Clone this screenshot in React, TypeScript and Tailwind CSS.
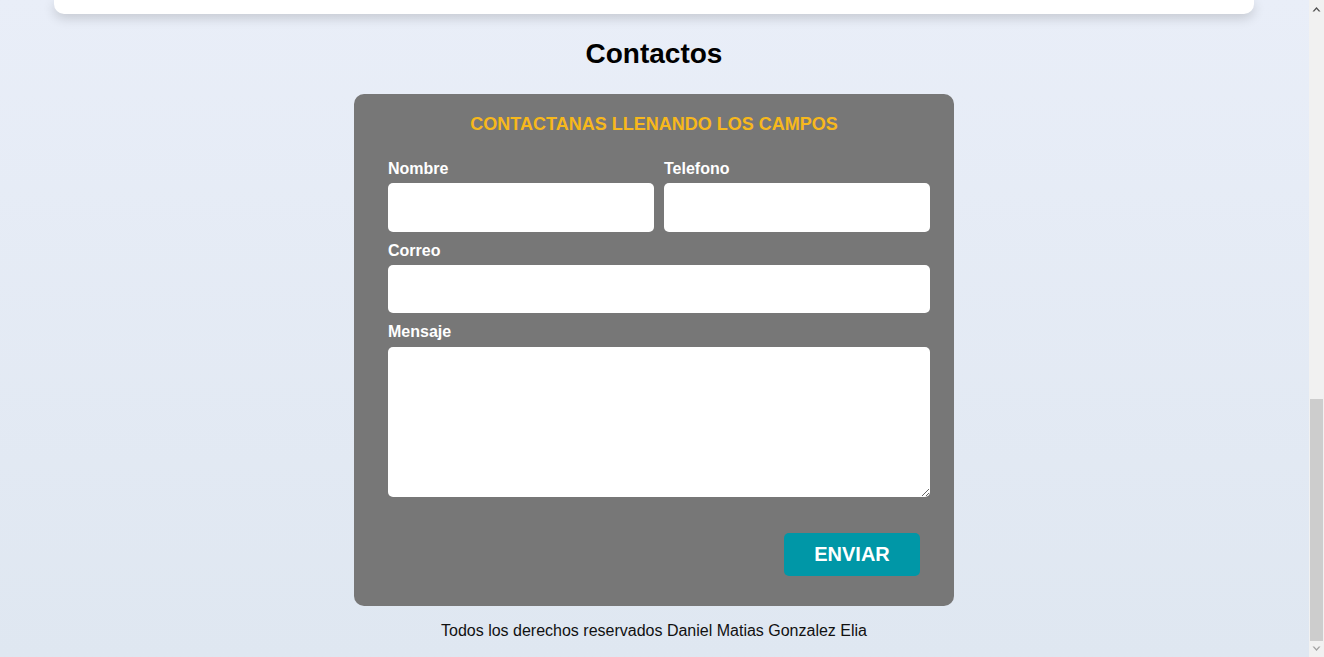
import React from 'react';

function ScrollArrow({ dir, color }: { dir: 'up' | 'down'; color: string }) {
  return (
    <svg width="9" height="6" viewBox="0 0 9 6">
      {dir === 'up' ? (
        <path d="M0.5 5.5 L4.5 1 L8.5 5.5 L6.8 5.5 L4.5 3 L2.2 5.5 Z" fill={color} />
      ) : (
        <path d="M0.5 0.5 L4.5 5 L8.5 0.5 L6.8 0.5 L4.5 3 L2.2 0.5 Z" fill={color} />
      )}
    </svg>
  );
}

function Field({ label, children }: { label: string; children: React.ReactNode }) {
  return (
    <div className="flex flex-col">
      <label className="pt-[1px] text-[16px] leading-[18px] font-bold text-white mb-[5px]">{label}</label>
      {children}
    </div>
  );
}

export default function App() {
  return (
    <div className="flex h-[657px] overflow-hidden font-['Liberation_Sans',Arial,sans-serif]">
      <div className="flex-1 pr-px flex flex-col items-center bg-gradient-to-b from-[#e9eef8] to-[#dfe7f1]">
        {/* bottom edge of the section above */}
        <div className="w-[1200px] h-[14px] shrink-0 bg-white rounded-b-[10px] shadow-[0_4px_12px_rgba(0,0,0,0.16)]" />

        <h2 className="mt-[24px] mb-[24px] text-[28px] leading-[32px] font-bold text-black">Contactos</h2>

        <form
          className="w-[600px] shrink-0 rounded-[10px] bg-[#777777] pt-[19px] pb-[30px] px-6"
          onSubmit={(e) => e.preventDefault()}
        >
          <h3 className="text-center text-[18px] leading-[22px] font-bold text-[#f7b81c]">
            CONTACTANAS LLENANDO LOS CAMPOS
          </h3>

          <div className="pl-[10px] mt-[24px] flex flex-col gap-[9px]">
            <div className="grid grid-cols-2 gap-x-[10px]">
              <Field label="Nombre">
                <input className="h-[49px] rounded-[5px] bg-white outline-none px-2" />
              </Field>
              <Field label="Telefono">
                <input className="h-[49px] rounded-[5px] bg-white outline-none px-2" />
              </Field>
            </div>
            <Field label="Correo">
              <input className="h-[48px] rounded-[5px] bg-white outline-none px-2" />
            </Field>
            <div className="flex flex-col">
              <label className="pt-[1px] text-[16px] leading-[18px] font-bold text-white mb-[6px]">Mensaje</label>
              <textarea className="h-[150px] rounded-[5px] bg-white outline-none p-2" />
            </div>
          </div>

          <div className="flex justify-end pr-[10px] mt-[36px]">
            <button
              type="submit"
              className="w-[136px] h-[43px] pb-[2px] rounded-[5px] bg-[#0097a7] text-white text-[20px] font-bold"
            >
              ENVIAR
            </button>
          </div>
        </form>

        <p className="mt-[15px] text-[16px] leading-[20px] text-[#111]">
          Todos los derechos reservados Daniel Matias Gonzalez Elia
        </p>
      </div>

      {/* scrollbar, scrolled to bottom */}
      <div className="w-[15px] shrink-0 flex flex-col bg-[#f1f1f1]">
        <div className="h-[17px] flex items-center justify-center">
          <ScrollArrow dir="up" color="#505050" />
        </div>
        <div className="flex-1" />
        <div className="h-[242px] mx-[1px] bg-[#cdcdcd]" />
        <div className="h-[16px] flex items-center justify-center">
          <ScrollArrow dir="down" color="#a3a3a3" />
        </div>
      </div>
    </div>
  );
}
